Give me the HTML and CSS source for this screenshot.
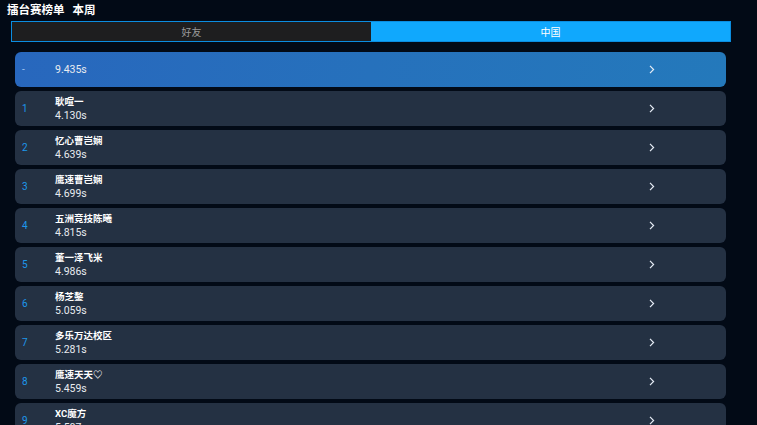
FILE: index.html
```html
<!DOCTYPE html>
<html lang="zh">
<head>
<meta charset="utf-8">
<link rel="stylesheet" href="styles.css">
</head>
<body>
<div class="page">
  <div class="title">擂台赛榜单<span class="sub">本周</span></div>
  <div class="tabs">
    <div class="tab">好友</div>
    <div class="tab active">中国</div>
  </div>
  <div class="list">
    <div class="row me">
      <div class="rank">-</div>
      <div class="info"><div class="time">9.435s</div></div>
      <div class="chev"><svg width="6" height="9" viewBox="0 0 6 9"><path d="M1 0.8 L4.6 4.5 L1 8.2" fill="none" stroke="#e6ecf5" stroke-width="1.2"/></svg></div>
    </div>
    <div class="row">
      <div class="rank">1</div>
      <div class="info"><div class="name">耿喧一</div><div class="time">4.130s</div></div>
      <div class="chev"><svg width="6" height="9" viewBox="0 0 6 9"><path d="M1 0.8 L4.6 4.5 L1 8.2" fill="none" stroke="#e6ecf5" stroke-width="1.2"/></svg></div>
    </div>
    <div class="row">
      <div class="rank">2</div>
      <div class="info"><div class="name">忆心曹岂娴</div><div class="time">4.639s</div></div>
      <div class="chev"><svg width="6" height="9" viewBox="0 0 6 9"><path d="M1 0.8 L4.6 4.5 L1 8.2" fill="none" stroke="#e6ecf5" stroke-width="1.2"/></svg></div>
    </div>
    <div class="row">
      <div class="rank">3</div>
      <div class="info"><div class="name">鹰速曹岂娴</div><div class="time">4.699s</div></div>
      <div class="chev"><svg width="6" height="9" viewBox="0 0 6 9"><path d="M1 0.8 L4.6 4.5 L1 8.2" fill="none" stroke="#e6ecf5" stroke-width="1.2"/></svg></div>
    </div>
    <div class="row">
      <div class="rank">4</div>
      <div class="info"><div class="name">五洲竞技陈曦</div><div class="time">4.815s</div></div>
      <div class="chev"><svg width="6" height="9" viewBox="0 0 6 9"><path d="M1 0.8 L4.6 4.5 L1 8.2" fill="none" stroke="#e6ecf5" stroke-width="1.2"/></svg></div>
    </div>
    <div class="row">
      <div class="rank">5</div>
      <div class="info"><div class="name">董一泽飞米</div><div class="time">4.986s</div></div>
      <div class="chev"><svg width="6" height="9" viewBox="0 0 6 9"><path d="M1 0.8 L4.6 4.5 L1 8.2" fill="none" stroke="#e6ecf5" stroke-width="1.2"/></svg></div>
    </div>
    <div class="row">
      <div class="rank">6</div>
      <div class="info"><div class="name">杨芝鏊</div><div class="time">5.059s</div></div>
      <div class="chev"><svg width="6" height="9" viewBox="0 0 6 9"><path d="M1 0.8 L4.6 4.5 L1 8.2" fill="none" stroke="#e6ecf5" stroke-width="1.2"/></svg></div>
    </div>
    <div class="row">
      <div class="rank">7</div>
      <div class="info"><div class="name">多乐万达校区</div><div class="time">5.281s</div></div>
      <div class="chev"><svg width="6" height="9" viewBox="0 0 6 9"><path d="M1 0.8 L4.6 4.5 L1 8.2" fill="none" stroke="#e6ecf5" stroke-width="1.2"/></svg></div>
    </div>
    <div class="row">
      <div class="rank">8</div>
      <div class="info"><div class="name">鹰速天天♡</div><div class="time">5.459s</div></div>
      <div class="chev"><svg width="6" height="9" viewBox="0 0 6 9"><path d="M1 0.8 L4.6 4.5 L1 8.2" fill="none" stroke="#e6ecf5" stroke-width="1.2"/></svg></div>
    </div>
    <div class="row">
      <div class="rank">9</div>
      <div class="info"><div class="name">XC魔方</div><div class="time">5.507s</div></div>
      <div class="chev"><svg width="6" height="9" viewBox="0 0 6 9"><path d="M1 0.8 L4.6 4.5 L1 8.2" fill="none" stroke="#e6ecf5" stroke-width="1.2"/></svg></div>
    </div>
  </div>
</div>
</body>
</html>
```

FILE: styles.css
```css
html, body {
  margin: 0;
  padding: 0;
  background: #020a16;
  overflow: hidden;
}
body {
  font-family: Roboto, "Noto Sans CJK SC", sans-serif;
  color: #ffffff;
  width: 757px;
  height: 425px;
}
.page {
  display: flex;
  flex-direction: column;
}
.title {
  margin-left: 7px;
  padding-top: 3px;
  height: 18px;
  line-height: 14px;
  font-size: 11.5px;
  font-weight: bold;
  color: #ffffff;
}
.title .sub {
  margin-left: 8px;
}
.tabs {
  margin-left: 11px;
  width: 720px;
  height: 21px;
  display: flex;
  box-sizing: border-box;
  border: 1px solid #0b8de0;
}
.tab {
  flex: 1;
  display: flex;
  align-items: center;
  justify-content: center;
  font-size: 10px;
  color: #9a9a9a;
  background: #1e1e1f;
}
.tab.active {
  background: #10a8fd;
  color: #ffffff;
}
.list {
  margin-top: 10px;
  margin-left: 15px;
  width: 711px;
  display: flex;
  flex-direction: column;
  gap: 4px;
}
.row {
  height: 35px;
  border-radius: 6px;
  background: #243143;
  display: grid;
  grid-template-columns: 40px 594px 20px;
  align-items: center;
}
.row.me {
  background: linear-gradient(100deg, #2867bd 0%, #2671bc 50%, #2479bb 100%);
}
.rank {
  padding-left: 7px;
  font-size: 10px;
  color: #1d97ec;
}
.row.me .rank {
  color: #9fc3ef;
}
.info {
  display: flex;
  flex-direction: column;
  justify-content: center;
  line-height: 14px;
}
.name {
  font-size: 9.5px;
  font-weight: bold;
  color: #ffffff;
}
.time {
  font-size: 10.5px;
  color: #e8ebf0;
}
.chev {
  display: flex;
  align-items: center;
}
```
